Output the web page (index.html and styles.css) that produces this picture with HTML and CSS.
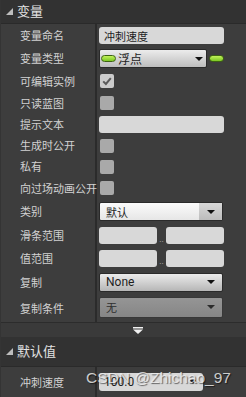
FILE: index.html
```html
<!DOCTYPE html>
<html lang="zh-CN">
<head>
    <meta charset="UTF-8">
    <meta name="viewport" content="width=device-width, initial-scale=1.0">
    <title>变量详情</title>
    <link rel="stylesheet" href="styles.css">
</head>
<body>
    <div class="panel">
        <div class="section-header">
            <svg class="caret" width="7" height="7" viewBox="0 0 7 7"><polygon points="7,0 7,7 0,7" fill="#bdbdbd"/></svg>
            <span>变量</span>
        </div>

        <div class="row h23">
            <div class="label">变量命名</div>
            <div class="value"><div class="text-input">冲刺速度</div></div>
        </div>
        <div class="row h23">
            <div class="label">变量类型</div>
            <div class="value">
                <div class="combo type-combo">
                    <span class="pill"></span>
                    <span class="combo-text">浮点</span>
                    <span class="arrow"></span>
                </div>
                <span class="pill pin"></span>
            </div>
        </div>
        <div class="row h22">
            <div class="label">可编辑实例</div>
            <div class="value">
                <div class="check checked">
                    <svg width="14" height="14" viewBox="0 0 14 14"><path d="M3.2 7.4 L5.9 10 L10.8 4.2" fill="none" stroke="#5a5a5a" stroke-width="2"/></svg>
                </div>
            </div>
        </div>
        <div class="row h22">
            <div class="label">只读蓝图</div>
            <div class="value"><div class="check"></div></div>
        </div>
        <div class="row h21">
            <div class="label">提示文本</div>
            <div class="value"><div class="text-input"></div></div>
        </div>
        <div class="row h21">
            <div class="label">生成时公开</div>
            <div class="value"><div class="check"></div></div>
        </div>
        <div class="row h21">
            <div class="label">私有</div>
            <div class="value"><div class="check"></div></div>
        </div>
        <div class="row h22">
            <div class="label">向过场动画公开</div>
            <div class="value"><div class="check"></div></div>
        </div>
        <div class="row h25">
            <div class="label">类别</div>
            <div class="value">
                <div class="combo light-combo">
                    <span class="combo-text">默认</span>
                    <span class="arrow-box"><span class="arrow"></span></span>
                </div>
            </div>
        </div>
        <div class="row h23">
            <div class="label">滑条范围</div>
            <div class="value range">
                <div class="text-input half"></div>
                <span class="dots">..</span>
                <div class="text-input half"></div>
            </div>
        </div>
        <div class="row h22">
            <div class="label">值范围</div>
            <div class="value range">
                <div class="text-input half"></div>
                <span class="dots">..</span>
                <div class="text-input half"></div>
            </div>
        </div>
        <div class="row h26">
            <div class="label">复制</div>
            <div class="value">
                <div class="combo wide-combo">
                    <span class="combo-text latin">None</span>
                    <span class="arrow"></span>
                </div>
            </div>
        </div>
        <div class="row h27">
            <div class="label">复制条件</div>
            <div class="value">
                <div class="combo disabled-combo">
                    <span class="combo-text">无</span>
                    <span class="arrow"></span>
                </div>
            </div>
        </div>

        <div class="expander">
            <svg width="10" height="7" viewBox="0 0 10 7"><rect x="0" y="0" width="10" height="1.5" fill="#f0f0f0"/><polygon points="0,2.5 10,2.5 5,7" fill="#f0f0f0"/></svg>
        </div>

        <div class="section-header tall">
            <svg class="caret" width="7" height="7" viewBox="0 0 7 7"><polygon points="7,0 7,7 0,7" fill="#bdbdbd"/></svg>
            <span>默认值</span>
        </div>
        <div class="row h31">
            <div class="label">冲刺速度</div>
            <div class="value">
                <div class="text-input number">
                    <span class="latin">100.0</span>
                    <span class="spin"></span>
                </div>
            </div>
        </div>

        <span class="watermark">CSDN @Zhichao_97</span>
    </div>
</body>
</html>
```

FILE: styles.css
```css
body {
    margin: 0;
    padding: 0;
    background-color: #3d3d3d;
    font-family: "Noto Sans CJK SC", "Noto Sans", sans-serif;
    color: #d8d8d8;
}
.panel {
    position: relative;
    width: 246px;
    height: 397px;
    overflow: hidden;
    display: flex;
    flex-direction: column;
    box-sizing: border-box;
    border-left: 1px solid #343434;
}
.section-header {
    height: 23px;
    flex-shrink: 0;
    display: flex;
    align-items: center;
    background-color: #323232;
    border-bottom: 1px solid #2a2a2a;
    font-size: 13px;
    color: #e2e2e2;
    line-height: 1;
}
.section-header.tall {
    height: 29px;
}
.section-header span {
    margin-top: -3px;
}
.caret {
    margin-left: 5px;
    margin-right: 4px;
}
.row {
    display: flex;
    flex-shrink: 0;
}
.h21 { height: 21px; }
.h22 { height: 22px; }
.h23 { height: 23px; }
.h25 { height: 25px; }
.h26 { height: 26px; }
.h27 { height: 27px; }
.h31 { height: 31px; }
.label {
    width: 75px;
    padding-left: 19px;
    border-right: 2px solid #2b2b2b;
    display: flex;
    align-items: center;
    font-size: 11px;
    line-height: 1;
    color: #d2d2d2;
    white-space: nowrap;
}
.value {
    flex: 1;
    display: flex;
    align-items: center;
    padding-left: 2px;
}
.text-input {
    width: 125px;
    height: 17px;
    box-sizing: border-box;
    background-color: #d8d8d8;
    border-radius: 3px;
    padding-left: 5px;
    display: flex;
    align-items: center;
    font-size: 11px;
    color: #1e1e1e;
}
.text-input.half {
    width: 58px;
}
.dots {
    width: 9px;
    text-align: center;
    font-size: 8px;
    color: #9a9a9a;
    line-height: 1;
    margin-top: 6px;
}
.text-input.number {
    width: 104px;
    height: 18px;
    justify-content: space-between;
    padding-right: 7px;
    margin-top: -2px;
}
.latin {
    font-family: Roboto, "Liberation Sans", sans-serif;
    font-size: 12px;
}
.spin {
    width: 0;
    height: 0;
    border-left: 3px solid transparent;
    border-right: 3px solid transparent;
    border-top: 4px solid #222;
}
.check {
    width: 14px;
    height: 14px;
    margin-left: 1px;
    border-radius: 2px;
    background-color: #a9a9a9;
}
.check.checked {
    background-color: #cbcbcb;
}
.check svg {
    display: block;
}
.combo {
    height: 19px;
    box-sizing: border-box;
    display: flex;
    align-items: center;
    border: 1px solid #2a2a2a;
    border-radius: 2px;
    font-size: 11px;
    color: #1e1e1e;
}
.combo-text {
    flex: 1;
    padding-left: 6px;
}
.arrow {
    width: 0;
    height: 0;
    border-left: 4px solid transparent;
    border-right: 4px solid transparent;
    border-top: 4px solid #111;
    margin-right: 7px;
}
.type-combo {
    width: 108px;
    background: linear-gradient(#ececec, #bdbdbd);
}
.type-combo .combo-text {
    padding-left: 2px;
    font-size: 12px;
}
.type-combo .arrow {
    margin-right: 3px;
}
.pill {
    width: 15px;
    height: 7px;
    margin-left: 1px;
    border-radius: 4px;
    box-sizing: border-box;
    border: 1px solid #3d6410;
    background: linear-gradient(#c2f25a, #7cc824);
}
.pin {
    margin-left: 2px;
}
.light-combo {
    width: 124px;
    background: linear-gradient(#fbfbfb, #e6e6e6);
}
.light-combo .combo-text {
    padding-left: 6px;
}
.arrow-box {
    width: 23px;
    height: 100%;
    display: flex;
    align-items: center;
    justify-content: center;
    background: linear-gradient(#d8d8d8, #bcbcbc);
}
.arrow-box .arrow {
    margin-right: 0;
}
.wide-combo {
    width: 124px;
    background: linear-gradient(#ebebeb, #b6b6b6);
}
.disabled-combo {
    width: 124px;
    height: 21px;
    margin-top: -3px;
    border-color: #383838;
    background: linear-gradient(#959595, #868686);
    color: #2e2e2e;
}
.disabled-combo .arrow {
    border-top-color: #2b2b2b;
}
.expander {
    height: 14px;
    flex-shrink: 0;
    border-top: 1px solid #2c2c2c;
    background-color: #3a3a3a;
    display: flex;
    align-items: center;
    padding-left: 132px;
}
.expander svg {
    display: block;
}
.watermark {
    position: absolute;
    left: 85px;
    top: 369px;
    font-family: "Liberation Sans", sans-serif;
    font-size: 15.5px;
    color: rgba(240, 240, 240, 0.82);
    text-shadow: 1px 1px 1px rgba(0, 0, 0, 0.55);
    white-space: nowrap;
}
```
